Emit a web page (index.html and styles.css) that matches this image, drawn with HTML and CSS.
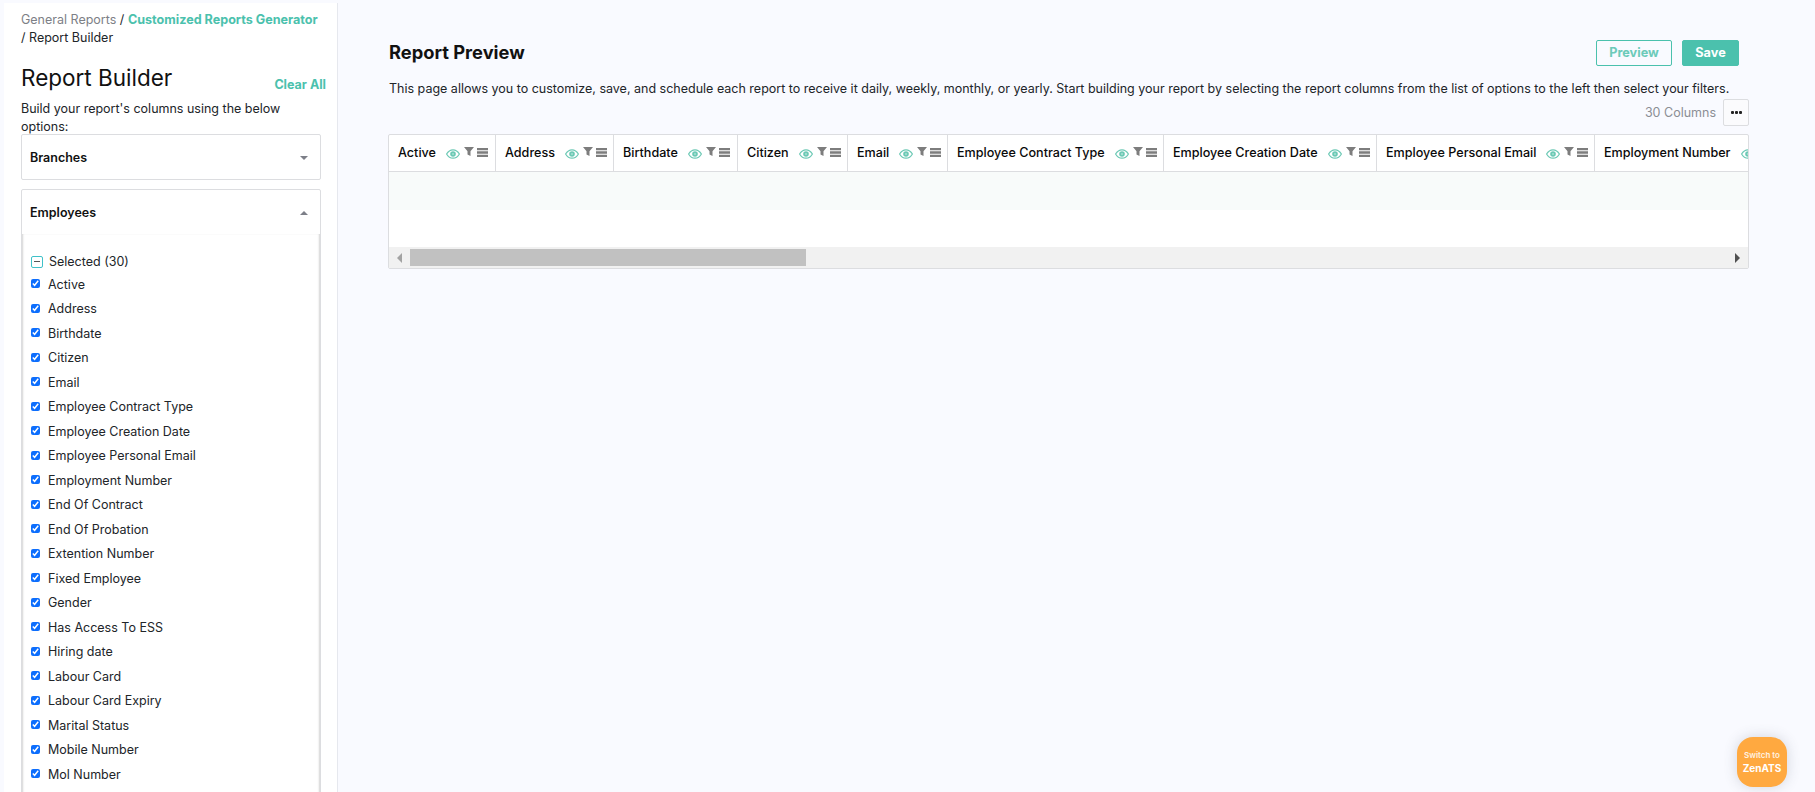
FILE: index.html
```html
<!doctype html>
<html lang="en">
<head>
    <meta charset="UTF-8">
    <title>Report Builder</title>
    <link rel="stylesheet" href="styles.css">
</head>
<body>
<svg class="defs" width="0" height="0">
    <symbol id="i-eye" viewBox="0 0 14 10">
        <path d="M.6 5C2.2 2.2 4.4.8 7 .8s4.800 1.400 6.400 4.200C11.800 7.800 9.600 9.200 7 9.200S2.200 7.800.6 5z" fill="none" stroke="#6cc9b5" stroke-width="1.200"/>
        <circle cx="7" cy="5" r="2.800" fill="#6cc9b5"/>
        <circle cx="7" cy="5" r="1" fill="#a8e0d3"/>
    </symbol>
    <symbol id="i-filter" viewBox="0 0 10 9">
        <path d="M0 0h10L6.500 4.200V9L3.500 7.600V4.200z" fill="#7d7d7d"/>
    </symbol>
    <symbol id="i-menu" viewBox="0 0 11 9">
        <path d="M0 0h11v2.300H0zM0 3.350h11v2.300H0zM0 6.700h11V9H0z" fill="#7d7d7d"/>
    </symbol>
</svg>

<div class="page">
    <aside class="sidebar">
        <div class="crumbs">
            <span class="crumb-muted">General Reports</span> / <a class="crumb-link">Customized Reports Generator</a> / Report Builder
        </div>
        <div class="builder-head">
            <h2>Report Builder</h2>
            <a class="clear-all">Clear All</a>
        </div>
        <p class="builder-hint">Build your report's columns using the below options:</p>

        <div class="panel panel-closed">
            <span>Branches</span>
            <i class="caret caret-down"></i>
        </div>

        <div class="panel panel-open">
            <div class="panel-title">
                <span>Employees</span>
                <i class="caret caret-up"></i>
            </div>
            <div class="panel-body">
                <div class="selected-row">
                    <i class="minus-box"></i>
                    <span>Selected (30)</span>
                </div>
                <ul class="options">
                    <li><input type="checkbox" checked>Active</li>
                    <li><input type="checkbox" checked>Address</li>
                    <li><input type="checkbox" checked>Birthdate</li>
                    <li><input type="checkbox" checked>Citizen</li>
                    <li><input type="checkbox" checked>Email</li>
                    <li><input type="checkbox" checked>Employee Contract Type</li>
                    <li><input type="checkbox" checked>Employee Creation Date</li>
                    <li><input type="checkbox" checked>Employee Personal Email</li>
                    <li><input type="checkbox" checked>Employment Number</li>
                    <li><input type="checkbox" checked>End Of Contract</li>
                    <li><input type="checkbox" checked>End Of Probation</li>
                    <li><input type="checkbox" checked>Extention Number</li>
                    <li><input type="checkbox" checked>Fixed Employee</li>
                    <li><input type="checkbox" checked>Gender</li>
                    <li><input type="checkbox" checked>Has Access To ESS</li>
                    <li><input type="checkbox" checked>Hiring date</li>
                    <li><input type="checkbox" checked>Labour Card</li>
                    <li><input type="checkbox" checked>Labour Card Expiry</li>
                    <li><input type="checkbox" checked>Marital Status</li>
                    <li><input type="checkbox" checked>Mobile Number</li>
                    <li><input type="checkbox" checked>Mol Number</li>
                </ul>
            </div>
        </div>
    </aside>

    <main class="content">
        <div class="content-head">
            <h1>Report Preview</h1>
            <div class="actions">
                <button class="btn btn-outline">Preview</button>
                <button class="btn btn-fill">Save</button>
            </div>
        </div>
        <p class="intro">This page allows you to customize, save, and schedule each report to receive it daily, weekly, monthly, or yearly. Start building your report by selecting the report columns from the list of options to the left then select your filters.</p>
        <div class="table-tools">
            <span>30 Columns</span>
            <button class="more-btn"><i></i><i></i><i></i></button>
        </div>

        <div class="grid">
            <div class="grid-head">
                <div class="col col-1">Active<span class="col-icons"><svg class="ic-eye"><use href="#i-eye"/></svg><svg class="ic-filter"><use href="#i-filter"/></svg><svg class="ic-menu"><use href="#i-menu"/></svg></span></div>
                <div class="col col-2">Address<span class="col-icons"><svg class="ic-eye"><use href="#i-eye"/></svg><svg class="ic-filter"><use href="#i-filter"/></svg><svg class="ic-menu"><use href="#i-menu"/></svg></span></div>
                <div class="col col-3">Birthdate<span class="col-icons"><svg class="ic-eye"><use href="#i-eye"/></svg><svg class="ic-filter"><use href="#i-filter"/></svg><svg class="ic-menu"><use href="#i-menu"/></svg></span></div>
                <div class="col col-4">Citizen<span class="col-icons"><svg class="ic-eye"><use href="#i-eye"/></svg><svg class="ic-filter"><use href="#i-filter"/></svg><svg class="ic-menu"><use href="#i-menu"/></svg></span></div>
                <div class="col col-5">Email<span class="col-icons"><svg class="ic-eye"><use href="#i-eye"/></svg><svg class="ic-filter"><use href="#i-filter"/></svg><svg class="ic-menu"><use href="#i-menu"/></svg></span></div>
                <div class="col col-6">Employee Contract Type<span class="col-icons"><svg class="ic-eye"><use href="#i-eye"/></svg><svg class="ic-filter"><use href="#i-filter"/></svg><svg class="ic-menu"><use href="#i-menu"/></svg></span></div>
                <div class="col col-7">Employee Creation Date<span class="col-icons"><svg class="ic-eye"><use href="#i-eye"/></svg><svg class="ic-filter"><use href="#i-filter"/></svg><svg class="ic-menu"><use href="#i-menu"/></svg></span></div>
                <div class="col col-8">Employee Personal Email<span class="col-icons"><svg class="ic-eye"><use href="#i-eye"/></svg><svg class="ic-filter"><use href="#i-filter"/></svg><svg class="ic-menu"><use href="#i-menu"/></svg></span></div>
                <div class="col col-9">Employment Number<span class="col-icons"><svg class="ic-eye"><use href="#i-eye"/></svg><svg class="ic-filter"><use href="#i-filter"/></svg><svg class="ic-menu"><use href="#i-menu"/></svg></span></div>
            </div>
            <div class="grid-row"></div>
            <div class="grid-empty"></div>
            <div class="scrollbar">
                <i class="arrow arrow-left"></i>
                <div class="track"><div class="thumb"></div></div>
                <i class="arrow arrow-right"></i>
            </div>
        </div>
    </main>
</div>

<button class="switch-btn"><small>Switch to</small><b>ZenATS</b></button>
</body>
</html>
```

FILE: styles.css
```css
* {
    box-sizing: border-box;
}

html, body {
    height: 100%;
    margin: 0;
    overflow: hidden;
}

body {
    background: #f9faff;
    color: #212529;
    font-family: Inter, "Noto Sans", sans-serif;
    font-size: 12.500px;
    line-height: 18px;
}

.defs {
    display: block;
    height: 0;
}

.page {
    display: flex;
    height: 792px;
    padding-top: 3px;
    overflow: hidden;
}

/* left column */
.sidebar {
    flex: none;
    width: 334px;
    margin-left: 4px;
    padding: 8px 15px 0 17px;
    background: #fff;
    border-right: 1px solid #e6e8ee;
    overflow: hidden;
}

.crumbs {
    width: 300px;
    line-height: 18px;
}

.crumb-muted {
    color: #7d8086;
}

.crumb-link {
    color: #4bc1ad;
    font-weight: 700;
    font-size: 12.600px;
}

.builder-head {
    display: flex;
    justify-content: space-between;
    align-items: flex-end;
    margin-top: 15px;
    width: 305px;
}

.builder-head h2 {
    margin: 0;
    font-size: 22.500px;
    line-height: 32px;
    font-weight: 400;
    color: #111;
}

.clear-all {
    color: #4bc1ad;
    font-weight: 700;
    line-height: 18px;
}

.builder-hint {
    margin: 6px 0 -2px;
    width: 290px;
}

.panel {
    width: 300px;
    background: #fff;
    border: 1px solid #dcdde0;
    border-radius: 2px;
}

.panel-closed {
    display: flex;
    justify-content: space-between;
    align-items: center;
    height: 46px;
    padding: 2px 12px 0 8px;
    font-weight: 600;
    color: #111;
}

.panel-open {
    margin-top: 9px;
}

.panel-title {
    display: flex;
    justify-content: space-between;
    align-items: center;
    height: 44px;
    padding: 2px 12px 0 8px;
    font-weight: 600;
    color: #111;
}

.panel-body {
    padding: 19px 9px 40px;
    box-shadow: inset 2px 0 2px -1px #d4d4d4, inset -2px 0 2px -1px #d4d4d4;
}

.caret {
    width: 0;
    height: 0;
    border-left: 4px solid transparent;
    border-right: 4px solid transparent;
}

.caret-down {
    border-top: 4px solid #7d7f88;
}

.caret-up {
    border-bottom: 4px solid #7d7f88;
}

.selected-row {
    display: flex;
    align-items: center;
    gap: 6px;
    height: 18px;
}

.minus-box {
    position: relative;
    width: 12px;
    height: 12px;
    border: 1px solid #3fc1c9;
    border-radius: 2px;
}

.minus-box::after {
    content: "";
    position: absolute;
    left: 2px;
    right: 2px;
    top: 4px;
    height: 1px;
    background: #555;
}

.options {
    list-style: none;
    margin: 1.500px 0 0;
    padding: 0;
}

.options li {
    display: flex;
    align-items: center;
    height: 24.500px;
    white-space: nowrap;
}

.options input {
    width: 9px;
    height: 9px;
    margin: 0 8px 2px 0;
    accent-color: #0d6efd;
}

/* report area */
.content {
    flex: 1;
    min-width: 0;
    padding: 0 0 0 50px;
}

.content-head {
    display: flex;
    justify-content: space-between;
    align-items: center;
    width: 1351px;
    padding-top: 37px;
}

.content-head h1 {
    margin: 0 0 2px 1px;
    font-size: 18.300px;
    line-height: 24px;
    font-weight: 700;
    color: #111;
}

.actions {
    display: flex;
    gap: 10px;
}

.btn {
    height: 26px;
    border-radius: 2px;
    font: 700 12.700px/18px Inter, sans-serif;
    padding: 0;
}

.btn-outline {
    width: 76px;
    background: transparent;
    border: 1px solid #4bc1ad;
    color: #6ccab9;
}

.btn-fill {
    width: 57px;
    background: #4bc1ad;
    border: 1px solid #4bc1ad;
    color: #fff;
}

.intro {
    margin: 14px 0 0 1px;
    white-space: nowrap;
}

.table-tools {
    display: flex;
    justify-content: flex-end;
    align-items: center;
    gap: 7px;
    width: 1361px;
    margin-top: 1px;
    color: #8b8e94;
}

.more-btn {
    display: flex;
    justify-content: center;
    align-items: center;
    gap: 1px;
    width: 26px;
    height: 27px;
    padding: 0;
    background: #fbfbfd;
    border: 1px solid #dcdde0;
    border-radius: 2px;
}

.more-btn i {
    width: 3px;
    height: 3px;
    background: #222;
    border-radius: 1px;
}

.grid {
    width: 1361px;
    margin-top: 8px;
    background: #fff;
    border: 1px solid #dcdde0;
    border-radius: 2px;
    overflow: hidden;
}

.grid-head {
    display: flex;
    height: 37px;
    border-bottom: 1px solid #dcdde0;
}

.col {
    flex: none;
    display: flex;
    align-items: center;
    padding: 0 0 1px 9px;
    border-right: 1px solid #dcdde0;
    font-size: 12.600px;
    font-weight: 500;
    color: #0a0a0a;
    white-space: nowrap;
}

.col-1 { width: 107px; }
.col-2 { width: 118px; }
.col-3 { width: 124px; }
.col-4 { width: 110px; }
.col-5 { width: 100px; }
.col-6 { width: 216px; }
.col-7 { width: 213px; }
.col-8 { width: 218px; }
.col-9 { width: 218px; border-right: 0; }

.col-icons {
    display: flex;
    align-items: center;
    margin-left: 10px;
}

.ic-eye {
    width: 14px;
    height: 10px;
    margin-top: 2px;
}

.ic-filter {
    width: 10px;
    height: 9px;
    margin: -2px 0 0 4px;
}

.ic-menu {
    width: 11px;
    height: 9px;
    margin: -1px 0 0 3px;
}

.grid-row {
    height: 38px;
    background: #f8fbfa;
}

.grid-empty {
    height: 37px;
}

.scrollbar {
    display: flex;
    align-items: center;
    height: 21px;
    background: #f1f1f1;
}

.arrow {
    flex: none;
    width: 21px;
    display: flex;
    justify-content: center;
}

.arrow::before {
    content: "";
    border-top: 5px solid transparent;
    border-bottom: 5px solid transparent;
}

.arrow-left::before {
    border-right: 5px solid #a3a3a3;
}

.arrow-right::before {
    border-left: 5px solid #505050;
}

.track {
    flex: 1;
    height: 17px;
}

.thumb {
    width: 396px;
    height: 100%;
    background: #c1c1c1;
}

/* floating switch button */
.switch-btn {
    position: absolute;
    left: 1737px;
    top: 737px;
    display: flex;
    flex-direction: column;
    align-items: center;
    width: 50px;
    height: 50px;
    padding: 12px 0 0;
    border: 0;
    border-radius: 16px;
    background: #ffa940;
    box-shadow: 0 0 14px rgba(60, 70, 90, .2);
    color: #fff;
    font-family: Inter, sans-serif;
}

.switch-btn small {
    font-size: 8px;
    line-height: 12px;
    font-weight: 600;
    opacity: .85;
}

.switch-btn b {
    font-size: 10px;
    line-height: 14px;
    font-weight: 700;
}
```
